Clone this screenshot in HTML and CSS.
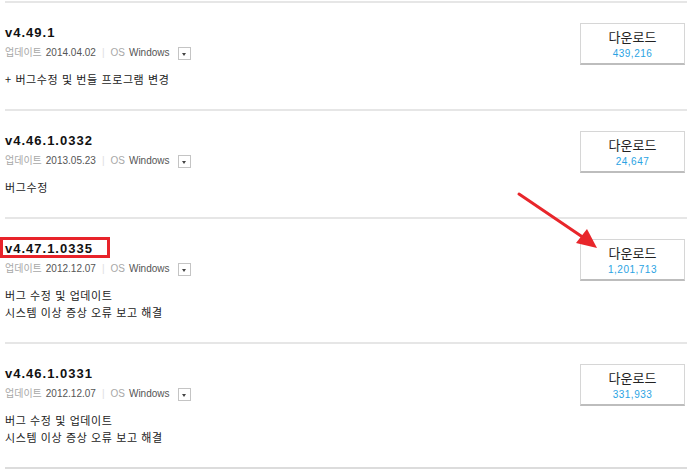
FILE: index.html
```html
<!DOCTYPE html>
<html lang="ko">
<head>
<meta charset="utf-8">
<link rel="stylesheet" href="styles.css">
</head>
<body>
<div class="list">
  <div class="item">
    <div class="info">
      <div class="title">v4.49.1</div>
      <div class="meta"><span class="lbl">업데이트</span><span class="val">2014.04.02</span><span class="sep">|</span><span class="lbl">OS</span><span class="val">Windows</span><span class="drop"></span></div>
      <div class="desc">+ 버그수정 및 번들 프로그램 변경</div>
    </div>
    <div class="dl"><div class="dl-label">다운로드</div><div class="dl-count">439,216</div></div>
  </div>
  <div class="item">
    <div class="info">
      <div class="title">v4.46.1.0332</div>
      <div class="meta"><span class="lbl">업데이트</span><span class="val">2013.05.23</span><span class="sep">|</span><span class="lbl">OS</span><span class="val">Windows</span><span class="drop"></span></div>
      <div class="desc">버그수정</div>
    </div>
    <div class="dl"><div class="dl-label">다운로드</div><div class="dl-count">24,647</div></div>
  </div>
  <div class="item">
    <div class="info">
      <div class="title"><span class="mark">v4.47.1.0335</span></div>
      <div class="meta"><span class="lbl">업데이트</span><span class="val">2012.12.07</span><span class="sep">|</span><span class="lbl">OS</span><span class="val">Windows</span><span class="drop"></span></div>
      <div class="desc">버그 수정 및 업데이트<br>시스템 이상 증상 오류 보고 해결</div>
    </div>
    <div class="dl"><div class="dl-label">다운로드</div><div class="dl-count">1,201,713</div></div>
  </div>
  <div class="item">
    <div class="info">
      <div class="title">v4.46.1.0331</div>
      <div class="meta"><span class="lbl">업데이트</span><span class="val">2012.12.07</span><span class="sep">|</span><span class="lbl">OS</span><span class="val">Windows</span><span class="drop"></span></div>
      <div class="desc">버그 수정 및 업데이트<br>시스템 이상 증상 오류 보고 해결</div>
    </div>
    <div class="dl"><div class="dl-label">다운로드</div><div class="dl-count">331,933</div></div>
  </div>
</div>
<svg class="arrow" width="690" height="471" viewBox="0 0 690 471">
  <line x1="519" y1="194" x2="584" y2="238" stroke="#e8262b" stroke-width="3" stroke-linecap="round"/>
  <polygon points="597,248 576,243 587,229" fill="#e8262b"/>
</svg>
</body>
</html>
```
FILE: styles.css
```css
html, body {
  margin: 0;
  padding: 0;
  background: #fff;
}
body {
  position: relative;
  width: 690px;
  height: 471px;
  overflow: hidden;
  font-family: "Liberation Sans", "Noto Sans CJK KR", sans-serif;
  color: #222;
}
.list {
  margin: 1px 3px 0 5px;
}
.item {
  display: flex;
  justify-content: space-between;
  align-items: flex-start;
  border-top: 2px solid #e6e6e6;
  padding: 22px 2px 21px 0;
}
.item:last-child {
  border-bottom: 2px solid #dcdcdc;
}
.title {
  font-size: 13px;
  line-height: 16px;
  font-weight: bold;
  letter-spacing: 1px;
  color: #111;
}
.mark {
  position: relative;
}
.mark::after {
  content: "";
  position: absolute;
  left: -5px;
  top: -4px;
  width: 104px;
  height: 15px;
  border: 3px solid #e8232a;
}
.meta {
  margin-top: 5px;
  font-size: 10px;
  line-height: 14px;
  display: flex;
  align-items: center;
}
.lbl {
  color: #a8a8a8;
  margin-right: 4px;
}
.lbl:first-child {
  letter-spacing: 0;
}
.val {
  color: #555;
}
.sep {
  color: #dedede;
  margin: 0 6px;
}
.drop {
  display: inline-block;
  position: relative;
  width: 11px;
  height: 11px;
  margin-left: 8px;
  border: 1px solid #c4c4c4;
  background: #fff;
}
.drop::after {
  content: "";
  position: absolute;
  left: 3px;
  top: 5px;
  border-left: 2.5px solid transparent;
  border-right: 2.5px solid transparent;
  border-top: 3px solid #444;
}
.desc {
  margin-top: 11px;
  font-family: "Noto Sans CJK KR", "Liberation Sans", sans-serif;
  font-size: 11px;
  line-height: 17px;
  letter-spacing: 0.6px;
  color: #222;
}
.dl {
  box-sizing: border-box;
  width: 105px;
  height: 42px;
  margin-top: -2px;
  border: 1px solid #d6d6d6;
  border-bottom: 2px solid #bdbdbd;
  text-align: center;
  padding-top: 5px;
  background: #fff;
}
.dl-label {
  font-family: "Noto Sans CJK KR", sans-serif;
  font-size: 13px;
  line-height: 16px;
  color: #222;
}
.dl-count {
  margin-top: 2px;
  font-size: 10px;
  line-height: 13px;
  letter-spacing: 0.5px;
  color: #2aa3e3;
}
.arrow {
  position: absolute;
  left: 0;
  top: 0;
  pointer-events: none;
}
```
